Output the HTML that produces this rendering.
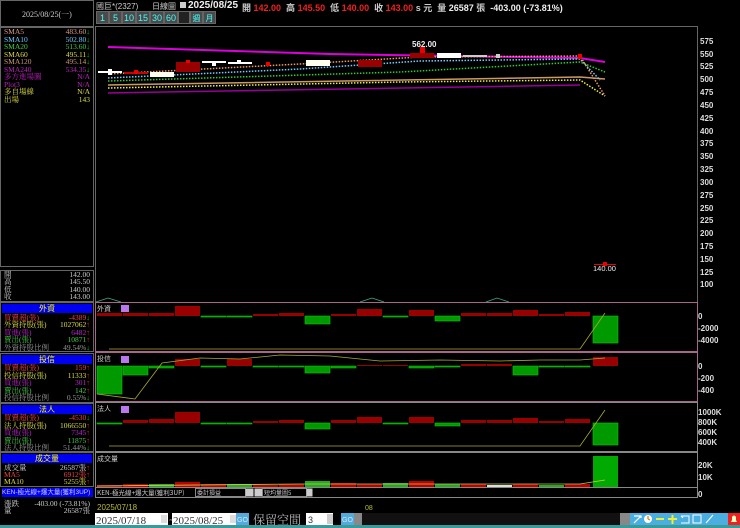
<!DOCTYPE html><html><head><meta charset="utf-8"><style>
*{margin:0;padding:0;box-sizing:border-box}
body{width:740px;height:528px;background:#000;overflow:hidden;position:relative;font-family:"Liberation Sans","Noto Sans CJK TC",sans-serif;font-size:8px;color:#ddd}
.a{position:absolute;white-space:nowrap}
.r{position:absolute;left:4px;width:86px;height:8px;line-height:8px;font-size:7.5px;font-family:"Liberation Serif","Noto Serif CJK SC",serif;white-space:nowrap}
.r span{position:absolute;right:0;top:0}
.hd{position:absolute;left:2px;width:90px;height:9px;background:#0000f0;color:#ff0;text-align:center;font-size:8px;line-height:9px}
.btn{position:absolute;top:11px;height:13px;background:#4a4a4a;color:#4ff;font-size:9px;line-height:13px;text-align:center;border:1px solid #666}
</style></head><body>
<div class="a" style="left:0;top:0;width:94px;height:27px;border:1px solid #666"></div>
<div class="a" style="left:22px;top:9px;color:#ccc;font-size:8px;font-family:'Liberation Serif','Noto Serif CJK SC',serif">2025/08/25(一)</div>
<div class="a" style="left:0;top:27px;width:94px;height:240px;border:1px solid #666"></div>
<div class="r" style="top:28px;color:#d98;">SMA5<span>483.60<b style="color:#0c0">↓</b></span></div>
<div class="r" style="top:36px;color:#6cf;">SMA10<span>502.80<b style="color:#0c0">↓</b></span></div>
<div class="r" style="top:43px;color:#4c4;">SMA20<span>513.60<b style="color:#0c0">↓</b></span></div>
<div class="r" style="top:51px;color:#dd4;">SMA60<span>495.11<b style="color:#0c0">↓</b></span></div>
<div class="r" style="top:58px;color:#c97;">SMA120<span>495.14<b style="color:#0c0">↓</b></span></div>
<div class="r" style="top:66px;color:#b2b;">SMA240<span>534.35<b style="color:#0c0">↓</b></span></div>
<div class="r" style="top:73px;color:#b2b;">多方進場圖<span>N/A</span></div>
<div class="r" style="top:81px;color:#b2b;">Plot3<span>N/A</span></div>
<div class="r" style="top:88px;color:#dd4;">多自場線<span>N/A</span></div>
<div class="r" style="top:96px;color:#dd4;">出場<span>143</span></div>
<div class="a" style="left:0;top:270px;width:94px;height:32px;border:1px solid #666"></div>
<div class="r" style="top:271px;color:#ccc;">開<span>142.00</span></div>
<div class="r" style="top:278px;color:#ccc;">高<span>145.50</span></div>
<div class="r" style="top:286px;color:#ccc;">低<span>140.00</span></div>
<div class="r" style="top:293px;color:#ccc;">收<span>143.00</span></div>
<div class="a" style="left:0;top:302px;width:94px;height:50px;border:1px solid #666"></div>
<div class="hd" style="top:304px">外資</div>
<div class="r" style="top:314px;color:#e44">買賣超(張)<span>-4389<b style="color:#0c0">↓</b></span></div>
<div class="r" style="top:321px;color:#dd4">外資持股(張)<span>1027062<b style="color:#e22">↑</b></span></div>
<div class="r" style="top:329px;color:#b2c">買進(張)<span>6482<b style="color:#e22">↑</b></span></div>
<div class="r" style="top:336px;color:#4c4">賣出(張)<span>10871<b style="color:#e22">↑</b></span></div>
<div class="r" style="top:344px;color:#999">外資持股比例<span>49.54%<b style="color:#0c0">↓</b></span></div>
<div class="a" style="left:0;top:353px;width:94px;height:50px;border:1px solid #666"></div>
<div class="hd" style="top:355px">投信</div>
<div class="r" style="top:364px;color:#e44">買賣超(張)<span>159<b style="color:#e22">↑</b></span></div>
<div class="r" style="top:372px;color:#dd4">投信持股(張)<span>11333<b style="color:#e22">↑</b></span></div>
<div class="r" style="top:379px;color:#b2c">買進(張)<span>301<b style="color:#e22">↑</b></span></div>
<div class="r" style="top:387px;color:#4c4">賣出(張)<span>142<b style="color:#e22">↑</b></span></div>
<div class="r" style="top:394px;color:#999">投信持股比例<span>0.55%<b style="color:#0c0">↓</b></span></div>
<div class="a" style="left:0;top:403px;width:94px;height:49px;border:1px solid #666"></div>
<div class="hd" style="top:405px">法人</div>
<div class="r" style="top:414px;color:#e44">買賣超(張)<span>-4530<b style="color:#0c0">↓</b></span></div>
<div class="r" style="top:422px;color:#dd4">法人持股(張)<span>1066550<b style="color:#e22">↑</b></span></div>
<div class="r" style="top:429px;color:#b2c">買進(張)<span>7345<b style="color:#e22">↑</b></span></div>
<div class="r" style="top:437px;color:#4c4">賣出(張)<span>11875<b style="color:#e22">↑</b></span></div>
<div class="r" style="top:444px;color:#999">法人持股比例<span>51.44%<b style="color:#0c0">↓</b></span></div>
<div class="a" style="left:0;top:452px;width:94px;height:35px;border:1px solid #666"></div>
<div class="hd" style="top:454px">成交量</div>
<div class="r" style="top:464px;color:#ccc">成交量<span>26587張<b style="color:#e22">↑</b></span></div>
<div class="r" style="top:471px;color:#e44">MA5<span>6912張<b style="color:#e22">↑</b></span></div>
<div class="r" style="top:478px;color:#dd4">MA10<span>5255張<b style="color:#e22">↑</b></span></div>
<div class="a" style="left:2px;top:488px;width:91px;height:9px;background:#0000f0;color:#ccf;font-size:6.5px;line-height:9px;overflow:hidden">KEN-極光線+爆大量(獲利3UP)</div>
<div class="r" style="top:500px;color:#ccc">漲跌<span>-403.00 (-73.81%)</span></div>
<div class="r" style="top:507px;color:#ccc">量<span>26587張</span></div>
<div class="a" style="left:96px;top:1px;color:#ccc;font-size:8px">國巨*(2327)</div>
<div class="a" style="left:152px;top:1px;color:#ccc;font-size:8px">日線圖</div>
<div class="a" style="left:180px;top:2px;width:6px;height:6px;background:#ccc"></div>
<div class="a" style="left:188px;top:0px;color:#eee;font-size:10px;font-weight:bold">2025/08/25</div>
<div class="a" style="left:242px;top:1px;font-size:9px;font-weight:bold;color:#ccc">開 <span style="color:#e22">142.00</span> &nbsp;高 <span style="color:#e22">145.50</span> &nbsp;低 <span style="color:#e22">140.00</span> &nbsp;收 <span style="color:#e22">143.00</span> s 元 &nbsp;量 <span style="color:#eee">26587</span> 張 &nbsp;<span style="color:#eee">-403.00 (-73.81%)</span></div>
<div class="btn" style="left:96px;width:13px">1</div><div class="btn" style="left:109px;width:13px">5</div><div class="btn" style="left:122px;width:14px">10</div><div class="btn" style="left:136px;width:14px">15</div><div class="btn" style="left:150px;width:14px">30</div><div class="btn" style="left:164px;width:14px">60</div><div class="btn" style="left:178px;width:12px;background:#222"></div><div class="btn" style="left:190px;width:13px;font-size:8px">週</div><div class="btn" style="left:203px;width:13px;font-size:8px">月</div>
<svg class="a" style="left:0;top:0" width="740" height="528" font-family="Liberation Sans,sans-serif">
<rect x="95.5" y="26.5" width="602" height="276" fill="none" stroke="#666"/>
<g fill="#ddd" font-size="8" font-weight="bold">
<text x="700" y="44">575</text><text x="700" y="57">550</text><text x="700" y="69">525</text><text x="700" y="82">500</text><text x="700" y="95">475</text><text x="700" y="108">450</text><text x="700" y="121">425</text><text x="700" y="134">400</text><text x="700" y="146">375</text><text x="700" y="159">350</text><text x="700" y="172">325</text><text x="700" y="185">300</text><text x="700" y="198">275</text><text x="700" y="211">250</text><text x="700" y="223">225</text><text x="700" y="236">200</text><text x="700" y="249">175</text><text x="700" y="262">150</text><text x="700" y="275">125</text><text x="700" y="287">100</text>
<text x="698" y="319">0</text><text x="698" y="331">-2000</text><text x="698" y="343">-4000</text>
<text x="698" y="369">0</text><text x="698" y="381">-200</text><text x="698" y="393">-400</text>
<text x="698" y="415">1000K</text><text x="698" y="425">800K</text><text x="698" y="435">600K</text><text x="698" y="445">400K</text>
<text x="698" y="468">20K</text><text x="698" y="480">10K</text><text x="698" y="497">0</text>
</g>
<path d="M108 47 L330 54 L580 58 L605 62" stroke="#d0d" stroke-width="2" fill="none"/>
<path d="M108 85 L580 77 L605 79" stroke="#c96" stroke-width="1.5" fill="none"/>
<path d="M108 88 L400 82 L580 80 L605 96" stroke="#ee4" stroke-width="1.5" stroke-dasharray="1.5 1.5" fill="none"/>
<path d="M108 81 L400 72 L580 62 L605 72" stroke="#3c3" stroke-width="1.5" stroke-dasharray="1.5 1.5" fill="none"/>
<path d="M108 78 L300 69 L420 61 L580 59 L600 80" stroke="#7cf" stroke-width="1.5" stroke-dasharray="1.5 1.5" fill="none"/>
<path d="M108 74 L300 64 L420 57 L580 56 L605 96" stroke="#e96" stroke-width="1.5" stroke-dasharray="1.5 1.5" fill="none"/>
<path d="M108 93 L580 85" stroke="#909" stroke-width="1.5" fill="none"/>
<g>
<rect x="98" y="71" width="24" height="2" fill="#fff"/><rect x="108" y="69" width="4" height="6" fill="#fff"/>
<rect x="124" y="72" width="24" height="2" fill="#c00"/><rect x="134" y="70" width="4" height="4" fill="#e00"/>
<rect x="150" y="72" width="24" height="5" fill="#ffe"/>
<rect x="176" y="62" width="24" height="10" fill="#900"/><rect x="186" y="60" width="4" height="3" fill="#e00"/>
<rect x="202" y="61" width="24" height="2" fill="#fff"/><rect x="212" y="61" width="4" height="5" fill="#fff"/>
<rect x="228" y="62" width="24" height="2" fill="#fff"/><rect x="237" y="60" width="4" height="4" fill="#fff"/>
<rect x="266" y="62" width="4" height="4" fill="#e00"/>
<rect x="306" y="60" width="24" height="6" fill="#ffe"/>
<rect x="358" y="60" width="24" height="7" fill="#900"/>
<rect x="410" y="53" width="24" height="5" fill="#900"/><rect x="420" y="47" width="5" height="6" fill="#e00"/>
<rect x="437" y="53" width="24" height="5" fill="#fff"/>
<rect x="463" y="55" width="24" height="2" fill="#ccc"/>
<rect x="496" y="54" width="4" height="4" fill="#ccc"/>
<rect x="578" y="54" width="4" height="5" fill="#e00"/>
<rect x="594" y="264" width="22" height="1" fill="#e00"/><rect x="603" y="262" width="4" height="4" fill="#e00"/>
</g>
<text x="412" y="47" fill="#eee" font-size="8" font-weight="bold">562.00</text>
<text x="593" y="271" fill="#eee" font-size="7.5">140.00</text>
<path d="M96 302 L108 298 L121 302 M360 302 L372 298 L384 302 M486 302 L497 298 L509 302" stroke="#4a8" fill="none" stroke-width=".8"/>
<rect x="95.5" y="302.5" width="602" height="49" fill="none" stroke="#a68"/>
<rect x="95.5" y="352.5" width="602" height="49" fill="none" stroke="#a68"/>
<rect x="95.5" y="402.5" width="602" height="49" fill="none" stroke="#888"/>
<rect x="95.5" y="452.5" width="602" height="35" fill="none" stroke="#888"/>
<g font-size="7" fill="#ccc" font-family="Noto Sans CJK TC,sans-serif"><text x="97" y="311">外資</text><text x="97" y="361">投信</text><text x="97" y="411">法人</text><text x="97" y="461">成交量</text></g>
<g fill="#b7e"><rect x="121" y="305" width="8" height="7"/><rect x="121" y="356" width="8" height="7"/><rect x="121" y="406" width="8" height="7"/></g>
<g fill="#900">
<rect x="97" y="313" width="25" height="3"/><rect x="123" y="313" width="25" height="3"/><rect x="149" y="313" width="25" height="3"/><rect x="175" y="306" width="25" height="10"/><rect x="253" y="314" width="25" height="2"/><rect x="279" y="313" width="25" height="3"/><rect x="331" y="314" width="25" height="2"/><rect x="357" y="309" width="25" height="7"/><rect x="409" y="310" width="25" height="6"/><rect x="461" y="313" width="25" height="3"/><rect x="487" y="313" width="25" height="3"/><rect x="513" y="310" width="25" height="6"/><rect x="539" y="314" width="25" height="2"/><rect x="565" y="312" width="25" height="4"/></g>
<g fill="#090" stroke="#0c0" stroke-width=".6">
<rect x="201" y="316" width="25" height="1"/><rect x="227" y="316" width="25" height="1"/><rect x="305" y="316" width="25" height="8"/><rect x="383" y="316" width="25" height="1"/><rect x="435" y="316" width="25" height="5"/><rect x="593" y="316" width="25" height="27"/></g>
<path d="M109 349 L580 349 L605 313" stroke="#aa3" fill="none" stroke-width=".8"/>
<g fill="#090" stroke="#0c0" stroke-width=".6">
<rect x="97" y="366" width="25" height="28"/><rect x="123" y="366" width="25" height="9"/><rect x="149" y="366" width="25" height="2"/><rect x="201" y="366" width="25" height="1"/><rect x="253" y="366" width="25" height="1"/><rect x="279" y="366" width="25" height="1"/><rect x="305" y="366" width="25" height="7"/><rect x="331" y="366" width="25" height="2"/><rect x="409" y="366" width="25" height="2"/><rect x="435" y="366" width="25" height="1"/><rect x="513" y="366" width="25" height="9"/><rect x="539" y="366" width="25" height="1"/><rect x="565" y="366" width="25" height="1"/></g>
<g fill="#900"><rect x="175" y="359" width="25" height="7"/><rect x="227" y="359" width="25" height="7"/><rect x="357" y="365" width="25" height="1"/><rect x="383" y="365" width="25" height="1"/><rect x="461" y="364" width="25" height="2"/><rect x="487" y="364" width="25" height="2"/><rect x="593" y="357" width="25" height="9"/></g>
<path d="M97 394 L135 399 L162 363 L200 358 L240 359 L280 355 L330 356 L380 361 L440 360 L500 361 L540 360 L580 360 L605 358" stroke="#aa3" fill="none" stroke-width=".8"/>
<g fill="#900"><rect x="123" y="420" width="25" height="3"/><rect x="149" y="419" width="25" height="4"/><rect x="175" y="412" width="25" height="11"/><rect x="253" y="421" width="25" height="2"/><rect x="279" y="420" width="25" height="3"/><rect x="331" y="420" width="25" height="3"/><rect x="357" y="417" width="25" height="6"/><rect x="409" y="417" width="25" height="6"/><rect x="461" y="420" width="25" height="3"/><rect x="487" y="420" width="25" height="3"/><rect x="513" y="418" width="25" height="5"/><rect x="539" y="421" width="25" height="2"/><rect x="565" y="419" width="25" height="4"/></g>
<g fill="#090" stroke="#0c0" stroke-width=".6"><rect x="97" y="423" width="25" height="1"/><rect x="201" y="423" width="25" height="1"/><rect x="227" y="423" width="25" height="1"/><rect x="305" y="423" width="25" height="6"/><rect x="383" y="423" width="25" height="1"/><rect x="435" y="423" width="25" height="3"/><rect x="593" y="423" width="25" height="22"/></g>
<path d="M109 446 L580 446 L605 410" stroke="#aa3" fill="none" stroke-width=".8"/>
<g fill="#b00"><rect x="97" y="485" width="25" height="2"/><rect x="123" y="484" width="25" height="3"/><rect x="175" y="482" width="25" height="5"/><rect x="201" y="484" width="25" height="3"/><rect x="253" y="485" width="25" height="2"/><rect x="279" y="484" width="25" height="3"/><rect x="357" y="484" width="25" height="3"/><rect x="409" y="481" width="25" height="6"/><rect x="461" y="484" width="25" height="3"/><rect x="565" y="484" width="25" height="3"/><rect x="331" y="483" width="25" height="4"/><rect x="513" y="484" width="25" height="3"/></g>
<g fill="#2a2"><rect x="149" y="484" width="25" height="3"/><rect x="227" y="484" width="25" height="3"/><rect x="305" y="481" width="25" height="6"/><rect x="383" y="483" width="25" height="4"/><rect x="539" y="485" width="25" height="2"/><rect x="435" y="484" width="25" height="3"/><rect x="593" y="456" width="25" height="31" fill="#0a0"/></g>
<g fill="#ddd"><rect x="487" y="485" width="25" height="2"/></g>
<path d="M97 486 L300 484 L500 484 L580 484 L605 480" stroke="#cc4" fill="none" stroke-width=".8"/>
<rect x="95.5" y="487.5" width="602" height="10" fill="#000" stroke="#888"/>
<text x="97" y="495" fill="#ccc" font-size="6.5" font-family="Noto Sans CJK TC,sans-serif">KEN-極光線+爆大量(獲利3UP)</text>
<rect x="195.5" y="488.5" width="50" height="8" fill="#000" stroke="#888"/><text x="197" y="495" fill="#ccc" font-size="6" font-family="Noto Sans CJK TC,sans-serif">委計損益</text>
<rect x="245.5" y="488.5" width="8" height="8" fill="#ccc"/><rect x="254.5" y="488.5" width="8" height="8" fill="#ccc"/>
<rect x="262.5" y="488.5" width="44" height="8" fill="#000" stroke="#888"/><text x="264" y="495" fill="#ccc" font-size="6" font-family="Noto Sans CJK TC,sans-serif">短均量圖5</text>
<rect x="306.5" y="488.5" width="6" height="8" fill="#ccc"/>
<text x="97" y="510" fill="#bb3" font-size="8">2025/07/18</text>
<text x="365" y="510" fill="#bb3" font-size="7">08</text>
<rect x="0" y="525" width="740" height="3" fill="#3a9a9a"/>
<rect x="95" y="513" width="73" height="12" fill="#fff"/><text x="96" y="524" fill="#333" font-size="11" font-family="Liberation Serif,serif">2025/07/18</text><rect x="161" y="515" width="6" height="8" fill="#ddd"/>
<text x="169" y="523" fill="#ccc" font-size="9">~</text>
<rect x="172" y="513" width="64" height="12" fill="#fff"/><text x="173" y="524" fill="#333" font-size="11" font-family="Liberation Serif,serif">2025/08/25</text><rect x="230" y="515" width="6" height="8" fill="#ddd"/>
<rect x="236" y="513" width="13" height="12" fill="#5ad"/><text x="237" y="522" fill="#cef" font-size="7">GO</text>
<text x="253" y="524" fill="#bbb" font-size="12" font-family="Noto Serif CJK SC,serif">保留空間</text>
<rect x="306" y="513" width="27" height="12" fill="#fff"/><text x="308" y="523" fill="#333" font-size="9">3</text><rect x="327" y="514" width="6" height="10" fill="#ccc"/>
<rect x="341" y="513" width="13" height="12" fill="#5ad"/><text x="342" y="522" fill="#cef" font-size="7">GO</text>
<rect x="354" y="513" width="8" height="12" fill="#888"/><rect x="362" y="513" width="258" height="12" fill="#111"/><rect x="620" y="513" width="10" height="12" fill="#888"/>
<rect x="630" y="513" width="102" height="12" fill="#4aaee0"/>
<g stroke="#fff" fill="none" stroke-width="1.2"><path d="M634 523 L641 516 M634 516 L641 516 L641 518"/><circle cx="648" cy="519" r="4" fill="#fff" stroke="none"/><path d="M648 519 L648 516 M648 519 L650 520" stroke="#e70"/></g>
<rect x="656" y="518" width="8" height="2" fill="#ee3"/><rect x="668" y="518" width="9" height="2" fill="#ee3"/><rect x="671.5" y="515" width="2" height="9" fill="#ee3"/>
<g stroke="#fff" fill="none" stroke-width="1"><path d="M681 516 L689 516 L689 523 L681 523 M681 516 L683 518"/><rect x="693" y="515" width="8" height="8"/><path d="M706 523 L713 515"/></g>
<rect x="728" y="513" width="12" height="12" fill="#e22"/><path d="M731 522 L737 522 L736 520 L736 517 Q734 514 732 517 L732 520 Z" fill="#ffb"/>
</svg>
</body></html>
